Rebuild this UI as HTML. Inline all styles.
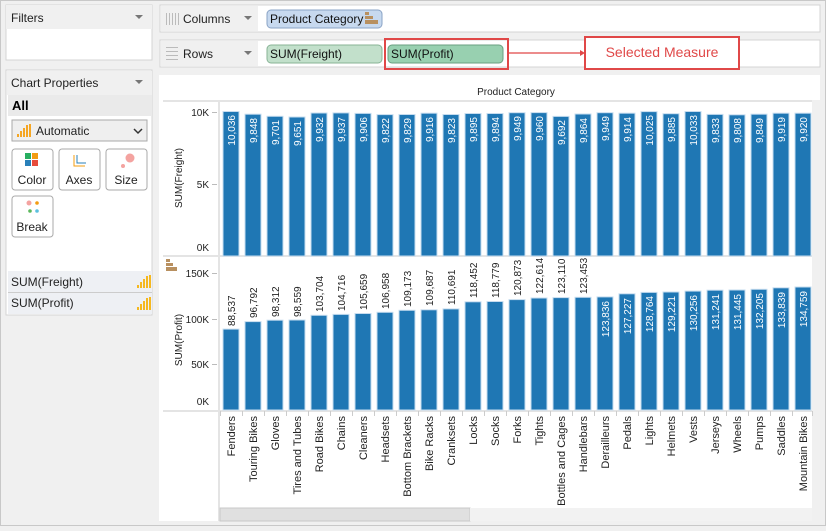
<!DOCTYPE html>
<html><head><meta charset="utf-8"><style>
body{margin:0;width:826px;height:526px;overflow:hidden;background:#f0f0f0;font-family:"Liberation Sans",sans-serif}
svg text{font-family:"Liberation Sans",sans-serif}
</style></head><body>
<svg width="826" height="526" viewBox="0 0 826 526" xmlns="http://www.w3.org/2000/svg">
<rect x="0.5" y="0.5" width="825" height="525" fill="#f0f0f0" stroke="#c8c8c8"/>
<!-- Filters -->
<rect x="6" y="5" width="146" height="55" fill="#fff" stroke="#d4d4d4"/>
<rect x="6" y="5" width="146" height="24" fill="#f0f0f0"/>
<text x="11" y="22" font-size="12" fill="#222">Filters</text>
<path d="M135 15h8l-4 4z" fill="#777"/>
<!-- Chart properties -->
<rect x="6" y="70" width="146" height="245" fill="#fff" stroke="#d4d4d4"/>
<rect x="7" y="71" width="145" height="24" fill="#f0f0f0"/>
<text x="11" y="87" font-size="12" fill="#222">Chart Properties</text>
<path d="M135 80h8l-4 4z" fill="#777"/>
<rect x="8" y="95" width="144" height="21" fill="#eaeaea"/>
<text x="12" y="110" font-size="13" font-weight="bold" fill="#000">All</text>
<rect x="12" y="120" width="135" height="21" fill="#efefef" stroke="#aaa"/>
<g fill="#f5a623"><rect x="17" y="134" width="2" height="3"/><rect x="20" y="131" width="2" height="6"/><rect x="23" y="128" width="2" height="9"/><rect x="26" y="125" width="2" height="12"/><rect x="29" y="124" width="2" height="13"/></g>
<text x="36" y="135" font-size="12" fill="#222">Automatic</text>
<path d="M134 129l4 4 4-4" stroke="#333" stroke-width="1.5" fill="none"/>
<rect x="12" y="149" width="41" height="41" rx="3" fill="#fff" stroke="#aaa"/>
<rect x="25" y="153" width="6" height="6" fill="#27ae60"/><rect x="32" y="153" width="6" height="6" fill="#f39c12"/><rect x="25" y="160" width="6" height="6" fill="#2980b9"/><rect x="32" y="160" width="6" height="6" fill="#e74c3c"/>
<text x="32" y="184" font-size="12" text-anchor="middle" fill="#222">Color</text>
<rect x="59" y="149" width="41" height="41" rx="3" fill="#fff" stroke="#aaa"/>
<path d="M74 155v11h11" stroke="#f39c12" fill="none"/><path d="M77 155v8h9" stroke="#2980b9" fill="none"/>
<text x="79" y="184" font-size="12" text-anchor="middle" fill="#222">Axes</text>
<rect x="106" y="149" width="41" height="41" rx="3" fill="#fff" stroke="#aaa"/>
<circle cx="130" cy="158" r="4.5" fill="#f4a3a0"/><circle cx="123" cy="166" r="2" fill="#f4a3a0"/>
<text x="126" y="184" font-size="12" text-anchor="middle" fill="#222">Size</text>
<rect x="12" y="196" width="41" height="41" rx="3" fill="#fff" stroke="#aaa"/>
<circle cx="29" cy="203" r="2.5" fill="#f4a3a0"/><circle cx="37" cy="203" r="1.8" fill="#f39c12"/><circle cx="30" cy="211" r="1.8" fill="#5cb85c"/><circle cx="37" cy="211" r="1.8" fill="#5bc0de"/>
<text x="32" y="231" font-size="12" text-anchor="middle" fill="#222">Break</text>
<rect x="8" y="271" width="144" height="21" fill="#eef0f4"/>
<line x1="8" y1="292.5" x2="152" y2="292.5" stroke="#ccc"/>
<rect x="8" y="293" width="144" height="21" fill="#eef0f4"/>
<text x="11" y="286" font-size="12" fill="#222">SUM(Freight)</text>
<text x="11" y="307" font-size="12" fill="#222">SUM(Profit)</text>
<g fill="#f5b820"><rect x="137" y="285" width="2" height="3"/><rect x="140" y="282" width="2" height="6"/><rect x="143" y="279" width="2" height="9"/><rect x="146" y="276" width="2" height="12"/><rect x="149" y="275" width="2" height="13"/>
<rect x="137" y="307" width="2" height="3"/><rect x="140" y="304" width="2" height="6"/><rect x="143" y="301" width="2" height="9"/><rect x="146" y="298" width="2" height="12"/><rect x="149" y="297" width="2" height="13"/></g>
<!-- shelves -->
<rect x="160" y="5" width="660" height="27" fill="#fff" stroke="#d4d4d4"/>
<rect x="161" y="6" width="97" height="25" fill="#f0f0f0"/>
<g fill="#bbb"><rect x="166" y="13" width="1" height="12"/><rect x="169" y="13" width="1" height="12"/><rect x="172" y="13" width="1" height="12"/><rect x="175" y="13" width="1" height="12"/><rect x="178" y="13" width="1" height="12"/></g>
<text x="183" y="23" font-size="12" fill="#222">Columns</text>
<path d="M244 16h8l-4 4z" fill="#777"/>
<rect x="267" y="10" width="115" height="18" rx="4" fill="#c7d9ef" stroke="#8aa3c5"/>
<text x="270" y="23" font-size="12" fill="#111">Product Category</text>
<g fill="#b89060"><rect x="365" y="12" width="4" height="3"/><rect x="365" y="16" width="8" height="3"/><rect x="365" y="20" width="13" height="4"/></g>
<rect x="160" y="40" width="660" height="27" fill="#fff" stroke="#d4d4d4"/>
<rect x="161" y="41" width="97" height="25" fill="#f0f0f0"/>
<g fill="#bbb"><rect x="166" y="47" width="12" height="1"/><rect x="166" y="51" width="12" height="1"/><rect x="166" y="55" width="12" height="1"/><rect x="166" y="59" width="12" height="1"/></g>
<text x="183" y="58" font-size="12" fill="#222">Rows</text>
<path d="M244 51h8l-4 4z" fill="#777"/>
<rect x="267" y="45" width="115" height="18" rx="4" fill="#c2e0cb" stroke="#88b396"/>
<text x="270" y="58" font-size="12" fill="#111">SUM(Freight)</text>
<rect x="388" y="45" width="115" height="18" rx="4" fill="#98d0b0" stroke="#6a9f80"/>
<text x="391" y="58" font-size="12" fill="#111">SUM(Profit)</text>
<rect x="385" y="39" width="123" height="30" fill="none" stroke="#e04848" stroke-width="2"/>
<line x1="508" y1="53" x2="580" y2="53" stroke="#e04848" stroke-width="1.2"/>
<path d="M580 50l5 3-5 3z" fill="#e04848"/>
<rect x="585" y="37" width="154" height="32" fill="#fff" stroke="#e04848" stroke-width="2"/>
<text x="662" y="57" font-size="14" text-anchor="middle" fill="#e04848">Selected Measure</text>
<!-- chart area -->
<rect x="159" y="75" width="661" height="446" fill="#fff"/>
<rect x="812" y="100" width="8" height="421" fill="#f0f0f0"/>
<text x="516" y="95" font-size="10" text-anchor="middle" fill="#222">Product Category</text>
<line x1="163" y1="101" x2="812" y2="101" stroke="#e4e4e4" stroke-width="2"/>
<line x1="163" y1="256" x2="812" y2="256" stroke="#e4e4e4" stroke-width="2"/>
<line x1="163" y1="411" x2="812" y2="411" stroke="#e4e4e4" stroke-width="2"/>
<line x1="219" y1="101" x2="219" y2="521" stroke="#e4e4e4" stroke-width="2"/>
<g font-size="10" fill="#222" text-anchor="end">
<text x="209" y="116">10K</text><text x="209" y="188">5K</text><text x="209" y="251">0K</text>
<text x="209" y="277">150K</text><text x="209" y="323">100K</text><text x="209" y="368">50K</text><text x="209" y="405">0K</text>
</g>
<g stroke="#bbb"><path d="M212 112.5h5M212 184.5h5M212 273.5h5M212 319.5h5M212 364.5h5"/></g>
<text transform="translate(182,178) rotate(-90)" font-size="10" text-anchor="middle" fill="#222">SUM(Freight)</text>
<text transform="translate(182,340) rotate(-90)" font-size="10" text-anchor="middle" fill="#222">SUM(Profit)</text>
<g fill="#b89060"><rect x="166" y="259" width="4" height="3"/><rect x="166" y="263" width="7" height="3"/><rect x="166" y="267" width="11" height="4"/></g>
<!-- scrollbar -->
<rect x="220" y="508" width="250" height="13" fill="#e0e0e0" stroke="#c8c8c8"/>
<rect x="470" y="508" width="342" height="13" fill="#f2f2f2"/>
<g fill="#1f77b4" stroke="#c6dcef" stroke-width="1">
<rect x="223" y="111.5" width="16" height="144.5"/><rect x="245" y="114.2" width="16" height="141.8"/><rect x="267" y="116.3" width="16" height="139.7"/><rect x="289" y="117" width="16" height="139"/><rect x="311" y="113" width="16" height="143"/><rect x="333" y="112.9" width="16" height="143.1"/><rect x="355" y="113.4" width="16" height="142.6"/><rect x="377" y="114.6" width="16" height="141.4"/><rect x="399" y="114.5" width="16" height="141.5"/><rect x="421" y="113.2" width="16" height="142.8"/><rect x="443" y="114.5" width="16" height="141.5"/><rect x="465" y="113.5" width="16" height="142.5"/><rect x="487" y="113.5" width="16" height="142.5"/><rect x="509" y="112.7" width="16" height="143.3"/><rect x="531" y="112.6" width="16" height="143.4"/><rect x="553" y="116.4" width="16" height="139.6"/><rect x="575" y="114" width="16" height="142"/><rect x="597" y="112.7" width="16" height="143.3"/><rect x="619" y="113.2" width="16" height="142.8"/><rect x="641" y="111.6" width="16" height="144.4"/><rect x="663" y="113.7" width="16" height="142.3"/><rect x="685" y="111.5" width="16" height="144.5"/><rect x="707" y="114.4" width="16" height="141.6"/><rect x="729" y="114.8" width="16" height="141.2"/><rect x="751" y="114.2" width="16" height="141.8"/><rect x="773" y="113.2" width="16" height="142.8"/><rect x="795" y="113.2" width="16" height="142.8"/>
<rect x="223" y="329.1" width="16" height="80.9"/><rect x="245" y="321.6" width="16" height="88.4"/><rect x="267" y="320.2" width="16" height="89.8"/><rect x="289" y="320" width="16" height="90"/><rect x="311" y="315.3" width="16" height="94.7"/><rect x="333" y="314.4" width="16" height="95.6"/><rect x="355" y="313.5" width="16" height="96.5"/><rect x="377" y="312.3" width="16" height="97.7"/><rect x="399" y="310.3" width="16" height="99.7"/><rect x="421" y="309.8" width="16" height="100.2"/><rect x="443" y="308.9" width="16" height="101.1"/><rect x="465" y="301.8" width="16" height="108.2"/><rect x="487" y="301.5" width="16" height="108.5"/><rect x="509" y="299.6" width="16" height="110.4"/><rect x="531" y="298" width="16" height="112"/><rect x="553" y="297.6" width="16" height="112.4"/><rect x="575" y="297.3" width="16" height="112.7"/><rect x="597" y="296.9" width="16" height="113.1"/><rect x="619" y="293.8" width="16" height="116.2"/><rect x="641" y="292.4" width="16" height="117.6"/><rect x="663" y="292" width="16" height="118"/><rect x="685" y="291.1" width="16" height="118.9"/><rect x="707" y="290.2" width="16" height="119.8"/><rect x="729" y="290" width="16" height="120"/><rect x="751" y="289.3" width="16" height="120.7"/><rect x="773" y="287.8" width="16" height="122.2"/><rect x="795" y="287" width="16" height="123"/>
</g>
<g font-size="10" fill="#fff" text-anchor="end">
<text transform="translate(235,115) rotate(-90)">10,036</text><text transform="translate(257,118) rotate(-90)">9,848</text><text transform="translate(279,120) rotate(-90)">9,701</text><text transform="translate(301,121) rotate(-90)">9,651</text><text transform="translate(323,117) rotate(-90)">9,932</text><text transform="translate(345,117) rotate(-90)">9,937</text><text transform="translate(367,117) rotate(-90)">9,906</text><text transform="translate(389,118) rotate(-90)">9,822</text><text transform="translate(411,118) rotate(-90)">9,829</text><text transform="translate(433,117) rotate(-90)">9,916</text><text transform="translate(455,118) rotate(-90)">9,823</text><text transform="translate(477,117) rotate(-90)">9,895</text><text transform="translate(499,117) rotate(-90)">9,894</text><text transform="translate(521,116) rotate(-90)">9,949</text><text transform="translate(543,116) rotate(-90)">9,960</text><text transform="translate(565,120) rotate(-90)">9,692</text><text transform="translate(587,118) rotate(-90)">9,864</text><text transform="translate(609,116) rotate(-90)">9,949</text><text transform="translate(631,117) rotate(-90)">9,914</text><text transform="translate(653,115) rotate(-90)">10,025</text><text transform="translate(675,117) rotate(-90)">9,885</text><text transform="translate(697,115) rotate(-90)">10,033</text><text transform="translate(719,118) rotate(-90)">9,833</text><text transform="translate(741,118) rotate(-90)">9,808</text><text transform="translate(763,118) rotate(-90)">9,849</text><text transform="translate(785,117) rotate(-90)">9,919</text><text transform="translate(807,117) rotate(-90)">9,920</text>
<text transform="translate(609,301) rotate(-90)">123,836</text><text transform="translate(631,298) rotate(-90)">127,227</text><text transform="translate(653,296) rotate(-90)">128,764</text><text transform="translate(675,296) rotate(-90)">129,221</text><text transform="translate(697,295) rotate(-90)">130,256</text><text transform="translate(719,294) rotate(-90)">131,241</text><text transform="translate(741,294) rotate(-90)">131,445</text><text transform="translate(763,293) rotate(-90)">132,205</text><text transform="translate(785,292) rotate(-90)">133,839</text><text transform="translate(807,291) rotate(-90)">134,759</text>
</g>
<g font-size="10" fill="#222" text-anchor="start">
<text transform="translate(235,326) rotate(-90)">88,537</text><text transform="translate(257,318) rotate(-90)">96,792</text><text transform="translate(279,317) rotate(-90)">98,312</text><text transform="translate(301,317) rotate(-90)">98,559</text><text transform="translate(323,312) rotate(-90)">103,704</text><text transform="translate(345,311) rotate(-90)">104,716</text><text transform="translate(367,310) rotate(-90)">105,659</text><text transform="translate(389,309) rotate(-90)">106,958</text><text transform="translate(411,307) rotate(-90)">109,173</text><text transform="translate(433,306) rotate(-90)">109,687</text><text transform="translate(455,305) rotate(-90)">110,691</text><text transform="translate(477,298) rotate(-90)">118,452</text><text transform="translate(499,298) rotate(-90)">118,779</text><text transform="translate(521,296) rotate(-90)">120,873</text><text transform="translate(543,294) rotate(-90)">122,614</text><text transform="translate(565,294) rotate(-90)">123,110</text><text transform="translate(587,294) rotate(-90)">123,453</text>
</g>
<g stroke="#ccc"><path d="M220.5 411v5M242.5 411v5M264.5 411v5M286.5 411v5M308.5 411v5M330.5 411v5M352.5 411v5M374.5 411v5M396.5 411v5M418.5 411v5M440.5 411v5M462.5 411v5M484.5 411v5M506.5 411v5M528.5 411v5M550.5 411v5M572.5 411v5M594.5 411v5M616.5 411v5M638.5 411v5M660.5 411v5M682.5 411v5M704.5 411v5M726.5 411v5M748.5 411v5M770.5 411v5M792.5 411v5M812.5 411v5"/></g>
<g font-size="11" fill="#222" text-anchor="end">
<text transform="translate(235,416) rotate(-90)">Fenders</text><text transform="translate(257,416) rotate(-90)">Touring Bikes</text><text transform="translate(279,416) rotate(-90)">Gloves</text><text transform="translate(301,416) rotate(-90)">Tires and Tubes</text><text transform="translate(323,416) rotate(-90)">Road Bikes</text><text transform="translate(345,416) rotate(-90)">Chains</text><text transform="translate(367,416) rotate(-90)">Cleaners</text><text transform="translate(389,416) rotate(-90)">Headsets</text><text transform="translate(411,416) rotate(-90)">Bottom Brackets</text><text transform="translate(433,416) rotate(-90)">Bike Racks</text><text transform="translate(455,416) rotate(-90)">Cranksets</text><text transform="translate(477,416) rotate(-90)">Locks</text><text transform="translate(499,416) rotate(-90)">Socks</text><text transform="translate(521,416) rotate(-90)">Forks</text><text transform="translate(543,416) rotate(-90)">Tights</text><text transform="translate(565,416) rotate(-90)">Bottles and Cages</text><text transform="translate(587,416) rotate(-90)">Handlebars</text><text transform="translate(609,416) rotate(-90)">Derailleurs</text><text transform="translate(631,416) rotate(-90)">Pedals</text><text transform="translate(653,416) rotate(-90)">Lights</text><text transform="translate(675,416) rotate(-90)">Helmets</text><text transform="translate(697,416) rotate(-90)">Vests</text><text transform="translate(719,416) rotate(-90)">Jerseys</text><text transform="translate(741,416) rotate(-90)">Wheels</text><text transform="translate(763,416) rotate(-90)">Pumps</text><text transform="translate(785,416) rotate(-90)">Saddles</text><text transform="translate(807,416) rotate(-90)">Mountain Bikes</text>
</g>
</svg>
</body></html>
